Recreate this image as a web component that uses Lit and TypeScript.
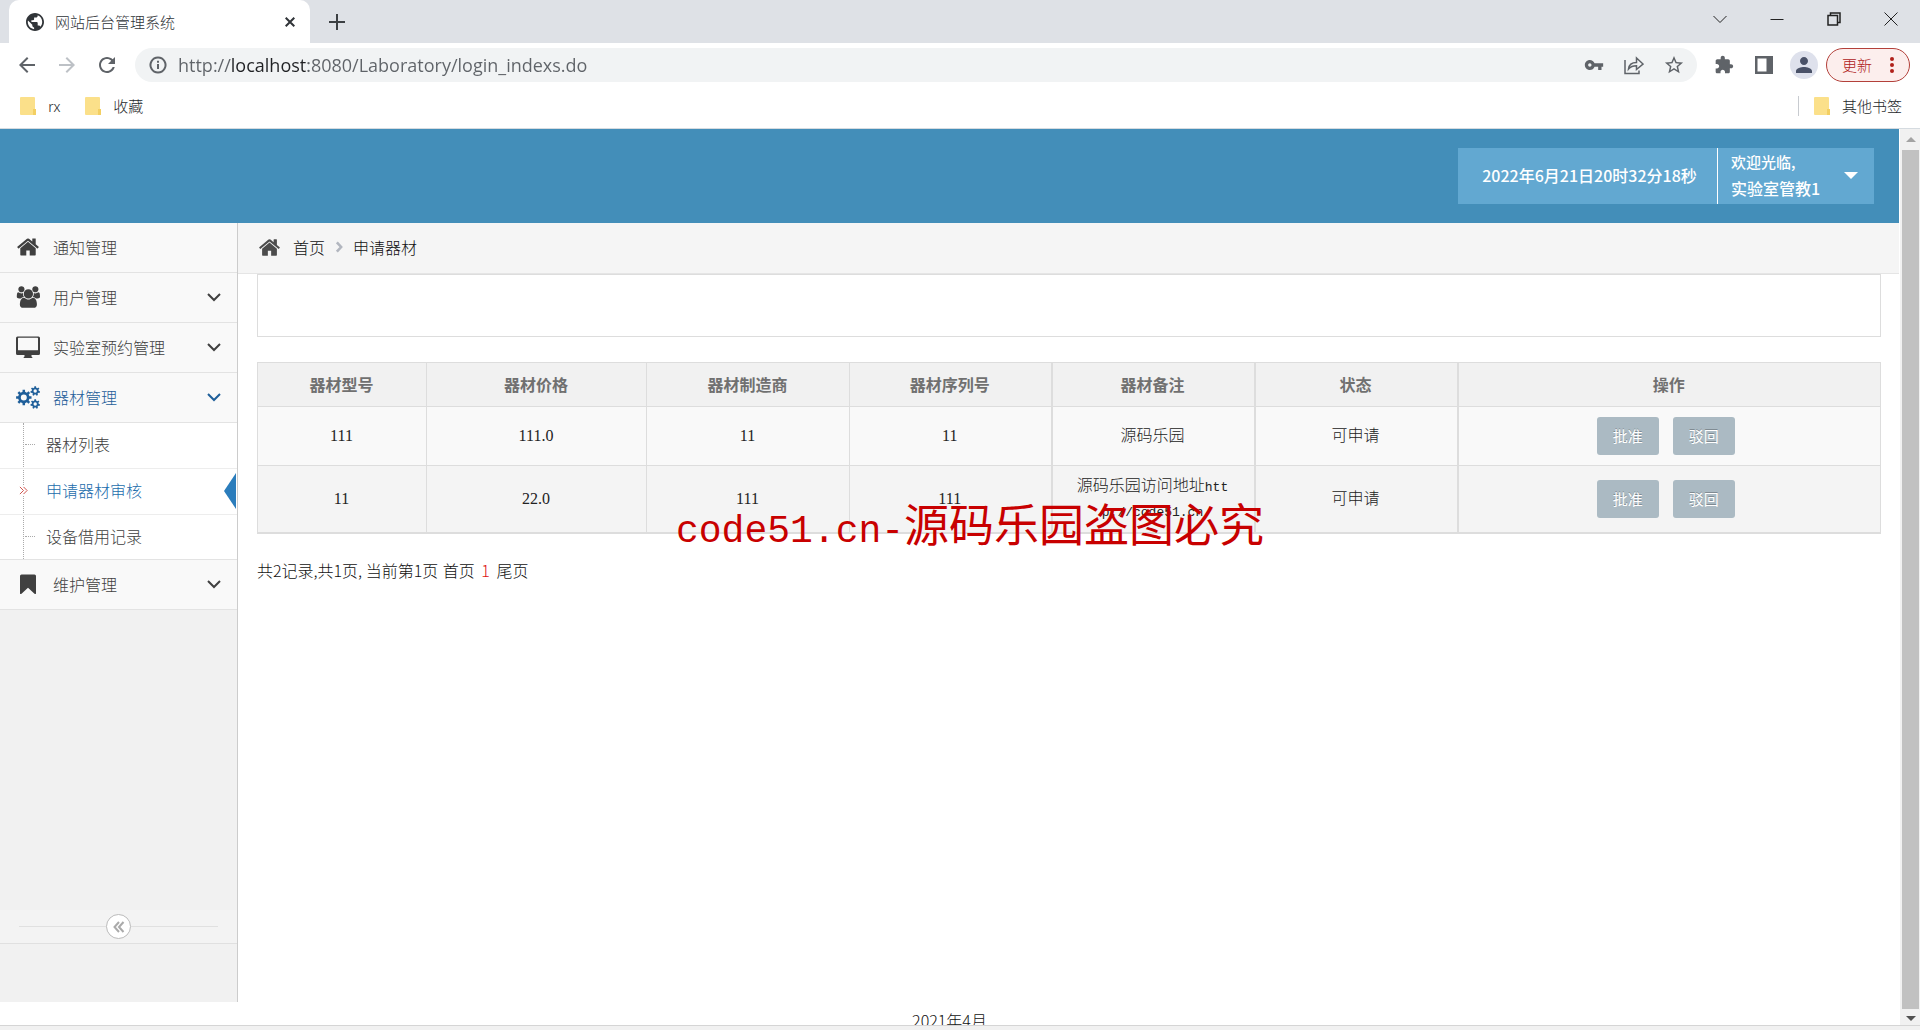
import { LitElement, html, css, svg, nothing } from "lit";
import { customElement, state } from "lit/decorators.js";
import { classMap } from "lit/directives/class-map.js";

/** Outline of a toothed wheel with a round hole, for use with the even-odd fill rule. */
function gear(cx: number, cy: number, r: number, hole: number, teeth: number): string {
  const inner = r * 0.74;
  const step = (Math.PI * 2) / teeth;
  const pt = (rad: number, a: number) =>
    `${(cx + rad * Math.cos(a)).toFixed(2)} ${(cy + rad * Math.sin(a)).toFixed(2)}`;
  const parts: string[] = [];
  for (let i = 0; i < teeth; i++) {
    const a = i * step - Math.PI / 2;
    parts.push(pt(inner, a - step * 0.28), pt(r, a - step * 0.2), pt(r, a + step * 0.2), pt(inner, a + step * 0.28));
  }
  return (
    `M${parts.join("L")}Z` +
    `M${cx - hole} ${cy}a${hole} ${hole} 0 1 0 ${hole * 2} 0a${hole} ${hole} 0 1 0 ${-hole * 2} 0Z`
  );
}

const fill = (box: string, d: string) =>
  svg`<svg viewBox=${box} fill="currentColor" aria-hidden="true"><path fill-rule="evenodd" d=${d} /></svg>`;
const line = (box: string, d: string, width: number) =>
  svg`<svg viewBox=${box} fill="none" stroke="currentColor" stroke-width=${width} aria-hidden="true"><path d=${d} /></svg>`;

const icons = {
  home: fill(
    "0 0 1792 1792",
    "M1472 992v480q0 26-19 45t-45 19h-384v-384h-256v384h-384q-26 0-45-19t-19-45v-480q0-1 .5-3t.5-3l575-474 575 474q1 2 1 6zm223-69l-62 74q-8 9-21 11h-3q-13 0-21-7l-692-577-692 577q-12 8-24 7-13-2-21-11l-62-74q-8-10-7-23.5t11-21.5l719-599q32-26 76-26t76 26l244 204v-195q0-14 9-23t23-9h192q14 0 23 9t9 23v408l219 182q10 8 11 21.5t-7 23.5z",
  ),
  users: fill(
    "0 0 1984 1792",
    "M657 896q-162 5-265 128h-134q-82 0-138-40.5t-56-118.5q0-353 124-353 6 0 43.5 21t97.5 42.5 119 21.5q67 0 133-23-5 37-5 66 0 139 81 256zm1071 637q0 120-73 189.5t-194 69.5h-874q-121 0-194-69.5t-73-189.5q0-53 3.5-103.5t14-109 26.5-108.5 43-97.5 62-81 85.5-53.5 111.5-20q10 0 43 21.5t73 48 107 48 135 21.5 135-21.5 107-48 73-48 43-21.5q61 0 111.5 20t85.5 53.5 62 81 43 97.5 26.5 108.5 14 109 3.5 103.5zm-1024-1277q0 106-75 181t-181 75-181-75-75-181 75-181 181-75 181 75 75 181zm704 384q0 159-112.5 271.5t-271.5 112.5-271.5-112.5-112.5-271.5 112.5-271.5 271.5-112.5 271.5 112.5 112.5 271.5zm576 225q0 78-56 118.5t-138 40.5h-134q-103-123-265-128 81-117 81-256 0-29-5-66 66 23 133 23 59 0 119-21.5t97.5-42.5 43.5-21q124 0 124 353zm-128-609q0 106-75 181t-181 75-181-75-75-181 75-181 181-75 181 75 75 181z",
  ),
  desktop: fill(
    "0 0 24 24",
    "M1.500 1.500H22.500Q24 1.500 24 3V18.500Q24 20 22.500 20H15.500V21.500Q16.500 22 16.500 23H7.500Q7.500 22 8.500 21.500V20H1.500Q0 20 0 18.500V3Q0 1.500 1.500 1.500ZM2 3.200V14.800Q2 15.300 2.500 15.300H21.500Q22 15.300 22 14.800V3.200Q22 2.800 21.500 2.800H2.500Q2 2.800 2 3.200Z",
  ),
  cogs: fill(
    "0 0 24 24",
    gear(7.8, 12.5, 7.8, 3, 8) + gear(19.2, 6, 4.8, 1.7, 7) + gear(19.2, 19, 4.8, 1.7, 7),
  ),
  bookmark: fill("0 0 24 24", "M5.500 2.500H18.500Q20 2.500 20 4V21.500Q19.500 22.500 18.500 21.700L12 15.800L5.500 21.700Q4.500 22.500 4 21.500V4Q4 2.500 5.500 2.500Z"),
  down: line("0 0 14 14", "M1 4l6 6 6-6", 2),
  right: line("0 0 14 14", "M4.500 1.500l5 5.500-5 5.500", 3),
  doubleRight: line("0 0 10 10", "M1 1l4 4-4 4M5 1l4 4-4 4", 1),
  doubleLeft: line("0 0 12 12", "M6 1L1.500 6 6 11M10.500 1L6 6l4.500 5", 2),
  globe: fill(
    "2 2 20 20",
    "M12 2C6.480 2 2 6.480 2 12s4.480 10 10 10 10-4.480 10-10S17.520 2 12 2zm-1 17.930c-3.950-.49-7-3.850-7-7.930 0-.62.08-1.210.21-1.790L9 15v1c0 1.100.9 2 2 2v1.930zm6.900-2.540c-.26-.81-1-1.390-1.900-1.390h-1v-3c0-.55-.45-1-1-1H8v-2h2c.55 0 1-.45 1-1V7h2c1.100 0 2-.9 2-2v-.41c2.930 1.190 5 4.060 5 7.410 0 2.080-.8 3.970-2.100 5.390z",
  ),
  close: line("0 0 10 10", "M.7 .7l8.600 8.600M9.300 .7l-8.600 8.600", 2),
  plus: line("0 0 16 16", "M8 0v16M0 8h16", 2),
  back: fill("0 0 24 24", "M20 11H7.830l5.590-5.590L12 4l-8 8 8 8 1.410-1.410L7.830 13H20v-2z"),
  forward: fill("0 0 24 24", "M12 4l-1.410 1.410L16.170 11H4v2h12.170l-5.580 5.590L12 20l8-8z"),
  reload: fill(
    "0 0 24 24",
    "M17.650 6.350C16.200 4.900 14.210 4 12 4c-4.420 0-7.990 3.580-7.990 8s3.570 8 7.990 8c3.730 0 6.840-2.550 7.730-6h-2.080c-.82 2.330-3.040 4-5.650 4-3.310 0-6-2.690-6-6s2.690-6 6-6c1.660 0 3.140.69 4.220 1.780L13 11h7V4l-2.350 2.350z",
  ),
  info: line("0 0 18 18", "M9 1.500a7.500 7.500 0 1 0 .01 0M9 8v5M9 4.800v2", 2),
  key: fill(
    "0 0 24 24",
    "M12.650 10C11.830 7.670 9.610 6 7 6c-3.310 0-6 2.690-6 6s2.690 6 6 6c2.610 0 4.830-1.670 5.650-4H17v4h4v-4h2v-4H12.650zM7 14c-1.100 0-2-.9-2-2s.9-2 2-2 2 .9 2 2-.9 2-2 2z",
  ),
  share: line("0 0 20 20", "M1 5v13.500h14v-3M4.500 14c.5-4.500 3.500-6.500 8-6.500v-4.500l6.500 6-6.500 5.500v-3.700c-3.500 0-6 .8-8 3.200z", 1.5),
  star: fill(
    "1 1 22 22",
    "M22 9.240l-7.190-.62L12 2 9.190 8.630 2 9.240l5.460 4.730L5.820 21 12 17.270 18.180 21l-1.630-7.030L22 9.240zM12 15.400l-3.760 2.270 1-4.280-3.320-2.880 4.380-.38L12 6.100l1.710 4.040 4.380.38-3.320 2.880 1 4.280L12 15.400z",
  ),
  puzzle: fill(
    "0 0 24 24",
    "M20.500 11H19V7c0-1.100-.9-2-2-2h-4V3.500C13 2.120 11.880 1 10.500 1S8 2.120 8 3.500V5H4c-1.100 0-1.990.9-1.990 2v3.800H3.500c1.490 0 2.700 1.210 2.700 2.700s-1.210 2.700-2.700 2.700H2V20c0 1.100.9 2 2 2h3.800v-1.500c0-1.490 1.210-2.700 2.700-2.700 1.490 0 2.700 1.210 2.700 2.700V22H17c1.100 0 2-.9 2-2v-4h1.500c1.380 0 2.500-1.120 2.500-2.500S21.880 11 20.500 11z",
  ),
  panel: fill("0 0 18 18", "M0 0H18V18H0ZM2.500 2.500V15.500H11.500V2.500Z"),
  person: fill(
    "2 2 20 20",
    "M12 12c2.210 0 4-1.790 4-4s-1.790-4-4-4-4 1.790-4 4 1.790 4 4 4zm0 2c-2.670 0-8 1.340-8 4v2h16v-2c0-2.660-5.330-4-8-4z",
  ),
  dots: svg`<svg viewBox="0 0 4 16" fill="currentColor" aria-hidden="true"><circle cx="2" cy="2" r="2"/><circle cx="2" cy="8" r="2"/><circle cx="2" cy="14" r="2"/></svg>`,
  winDown: line("0 0 14 14", "M.5 4l6.500 6.500L13.500 4", 1),
  winMin: line("0 0 14 14", "M.5 7.500h13", 1),
  winMax: line("0 0 14 14", "M1 3.500h9.500v9.500h-9.500zM3.500 3.500v-2.500h9.500v9.500h-2.500", 1.5),
  winClose: line("0 0 14 14", "M.5 .5l13 13M13.500 .5l-13 13", 1),
  folder: svg`<svg viewBox="0 0 16 18" aria-hidden="true"><rect width="15" height="18" rx="1" fill="#fbe08a"/><path d="M13 12h3v6h-3z" fill="#f3cf62"/></svg>`,
};

type IconName = keyof typeof icons;

interface MenuItem {
  label: string;
  icon: IconName;
  children?: string[];
  leaf?: boolean;
}

const MENU: MenuItem[] = [
  { label: "通知管理", icon: "home", leaf: true },
  { label: "用户管理", icon: "users" },
  { label: "实验室预约管理", icon: "desktop" },
  { label: "器材管理", icon: "cogs", children: ["器材列表", "申请器材审核", "设备借用记录"] },
  { label: "维护管理", icon: "bookmark" },
];

@customElement("browser-frame")
export class BrowserFrame extends LitElement {
  static styles = css`
    :host {
      display: block;
      color: #5f6368;
      font: 300 15px/20px "Noto Sans CJK SC", sans-serif;
    }
    svg { display: block; width: 100%; height: 100%; }
    button { border: 0; padding: 0; background: none; color: inherit; font: inherit; }
    .strip { display: flex; align-items: flex-end; height: 43px; background: #dee1e6; }
    .tab {
      display: flex;
      align-items: center;
      gap: 11px;
      box-sizing: border-box;
      width: 301px;
      height: 43px;
      margin-left: 9px;
      padding: 0 15px 0 17px;
      border-radius: 10px 10px 0 0;
      background: #fff;
      color: #303438;
    }
    .title { flex: 1; }
    .i10 { width: 10px; height: 10px; }
    .i14 { width: 14px; height: 14px; }
    .i16 { width: 16px; height: 16px; }
    .i18 { width: 18px; height: 18px; }
    .new { width: 54px; height: 43px; display: grid; place-items: center; color: #3c4043; }
    .window { display: flex; margin-left: auto; padding-right: 1px; align-self: flex-start; color: #222; }
    .window button { display: grid; place-items: center; width: 57px; height: 37px; }
    .bar { display: flex; align-items: center; height: 44px; padding: 0 10px 0 7px; }
    .slot { display: grid; place-items: center; width: 40px; height: 34px; }
    .i24 { width: 24px; height: 24px; }
    .i20 { width: 20px; height: 20px; }
    .dim { color: #bdc1c6; }
    .address {
      display: flex;
      align-items: center;
      flex: 1;
      height: 34px;
      margin: 0 7px 0 8px;
      padding: 0 3px 0 14px;
      border-radius: 17px;
      background: #f1f3f4;
    }
    .url {
      flex: 1;
      min-width: 0;
      height: 28px;
      margin-left: 11px;
      padding: 0;
      border: 0;
      outline: 0;
      font: 18px/28px "Open Sans", sans-serif;
      color: #5f6368;
      -webkit-text-fill-color: transparent;
      background: linear-gradient(to right, #5f6368 53px, #202124 53px 130px, #5f6368 130px);
      background-clip: text;
      -webkit-background-clip: text;
    }
    .avatar { display: grid; place-items: center; width: 28px; height: 28px; border-radius: 50%; background: #dee1ec; color: #4a5268; }
    .update {
      display: flex;
      align-items: center;
      justify-content: space-between;
      box-sizing: border-box;
      width: 84px;
      height: 34px;
      margin-left: 2px;
      padding: 0 15px;
      border: 1px solid #b3403a;
      border-radius: 17px;
      background: #fceeed;
      color: #b0211a;
    }
    .dots { width: 4px; height: 16px; }
    .marks { display: flex; align-items: center; height: 37px; padding: 0 18px 4px 20px; gap: 25px; color: #26292c; border-bottom: 1px solid #d5dbe0; }
    .mark { display: flex; align-items: center; gap: 12px; color: inherit; text-decoration: none; }
    .folder { width: 16px; height: 18px; }
    .other { margin-left: auto; padding-left: 15px; border-left: 1px solid #c8cbd0; }
  `;

  private slotButton(icon: IconName, label: string, size = "i20", extra = "") {
    return html`<button class="slot ${extra}" aria-label=${label}><span class=${size}>${icons[icon]}</span></button>`;
  }

  render() {
    return html`
      <div class="strip">
        <div class="tab">
          <span class="i18">${icons.globe}</span>
          <span class="title">网站后台管理系统</span>
          <button class="i10" aria-label="关闭标签页">${icons.close}</button>
        </div>
        <button class="new" aria-label="新标签页"><span class="i16">${icons.plus}</span></button>
        <div class="window">
          <button aria-label="搜索标签页"><span class="i14">${icons.winDown}</span></button>
          <button aria-label="最小化"><span class="i14">${icons.winMin}</span></button>
          <button aria-label="还原"><span class="i14">${icons.winMax}</span></button>
          <button aria-label="关闭"><span class="i14">${icons.winClose}</span></button>
        </div>
      </div>
      <div class="bar">
        ${this.slotButton("back", "后退", "i24")}
        ${this.slotButton("forward", "前进", "i24", "dim")}
        ${this.slotButton("reload", "重新加载", "i24")}
        <div class="address">
          <span class="i18">${icons.info}</span>
          <input class="url" aria-label="地址" value="http://localhost:8080/Laboratory/login_indexs.do" />
          ${this.slotButton("key", "密码")}
          ${this.slotButton("share", "分享")}
          ${this.slotButton("star", "收藏此页")}
        </div>
        ${this.slotButton("puzzle", "扩展程序")}
        ${this.slotButton("panel", "侧边栏", "i18")}
        <button class="slot" aria-label="用户"><span class="avatar"><span class="i20">${icons.person}</span></span></button>
        <button class="update">更新 <span class="dots">${icons.dots}</span></button>
      </div>
      <div class="marks">
        <a class="mark" href="#"><span class="folder">${icons.folder}</span>rx</a>
        <a class="mark" href="#"><span class="folder">${icons.folder}</span>收藏</a>
        <a class="mark other" href="#"><span class="folder">${icons.folder}</span>其他书签</a>
      </div>
    `;
  }
}

@customElement("side-menu")
export class SideMenu extends LitElement {
  static styles = css`
    :host {
      display: flex;
      flex-direction: column;
      box-sizing: border-box;
      width: 238px;
      border-right: 1px solid #ccc;
      background: #f1f1f1;
      font: 300 16px/24px "Noto Sans CJK SC", sans-serif;
    }
    svg { display: block; width: 100%; height: 100%; }
    ul { margin: 0; padding: 0; list-style: none; }
    .item {
      display: flex;
      align-items: center;
      height: 47px;
      padding: 0 16px 2px;
      border-bottom: 1px solid #e3e3e3;
      background: #f9f9f9;
      color: #404040;
      text-decoration: none;
    }
    .open { color: #1f5f9a; }
    .icon { width: 24px; height: 24px; margin-right: 13px; }
    .label { flex: 1; }
    .arrow { width: 14px; height: 14px; }
    .sub { position: relative; border-bottom: 1px solid #e3e3e3; background: #fff; }
    .sub::before { content: ""; position: absolute; top: 0; bottom: 0; left: 23px; border-left: 1px dotted #aaa; }
    .entry {
      display: flex;
      align-items: center;
      position: relative;
      height: 42px;
      padding: 0 0 3px 46px;
      border-bottom: 1px solid #ededed;
      color: #404040;
      text-decoration: none;
    }
    .sub li:last-child .entry { height: 41px; border-bottom: 0; }
    .entry::before { content: ""; position: absolute; left: 25px; top: 21px; width: 10px; border-top: 1px dotted #aaa; }
    .current { color: #1b6dac; }
    .current::before { display: none; }
    .current::after {
      content: "";
      position: absolute;
      right: 1px;
      top: 4px;
      border: 18px solid transparent;
      border-width: 18px 12px 18px 0;
      border-right-color: #2b7dbc;
    }
    .mark { position: absolute; left: 19px; top: 17px; width: 9px; height: 9px; background: #fff; color: #c8413a; }
    .toggle {
      display: flex;
      align-items: center;
      height: 33px;
      margin-top: auto;
      margin-bottom: 58px;
      padding: 0 19px;
      border-bottom: 1px solid #e0e0e0;
      background: #f3f3f3;
    }
    .rule { flex: 1; border-top: 1px solid #e0e0e0; }
    .collapse {
      display: grid;
      place-items: center;
      width: 25px;
      height: 25px;
      padding: 0;
      border: 1px solid #bbb;
      border-radius: 50%;
      background: #fff;
      color: #aaa;
    }
    .tiny { width: 12px; height: 12px; }
  `;

  @state() private current = "申请器材审核";

  render() {
    return html`
      <nav>
        <ul>
          ${MENU.map(
            (item) => html`<li>
              <a class=${classMap({ item: true, open: !!item.children })} href="#">
                <span class="icon">${icons[item.icon]}</span>
                <span class="label">${item.label}</span>
                ${item.leaf ? nothing : html`<span class="arrow">${icons.down}</span>`}
              </a>
              ${item.children
                ? html`<ul class="sub">
                    ${item.children.map(
                      (name) => html`<li>
                        <a
                          class=${classMap({ entry: true, current: name === this.current })}
                          href="#"
                          @click=${() => (this.current = name)}
                          >${name === this.current ? html`<span class="mark">${icons.doubleRight}</span>` : nothing}${name}</a
                        >
                      </li>`,
                    )}
                  </ul>`
                : nothing}
            </li>`,
          )}
        </ul>
      </nav>
      <div class="toggle">
        <span class="rule"></span>
        <button class="collapse" aria-label="收起菜单"><span class="tiny">${icons.doubleLeft}</span></button>
        <span class="rule"></span>
      </div>
    `;
  }
}

interface Row {
  model: string;
  price: string;
  maker: string;
  serial: string;
  note: string;
  link?: string;
  status: string;
}

const HEADS = ["器材型号", "器材价格", "器材制造商", "器材序列号", "器材备注", "状态", "操作"];

const ROWS: Row[] = [
  { model: "111", price: "111.0", maker: "11", serial: "11", note: "源码乐园", status: "可申请" },
  { model: "11", price: "22.0", maker: "111", serial: "111", note: "源码乐园访问地址", link: "http://code51.cn", status: "可申请" },
];

@customElement("equipment-table")
export class EquipmentTable extends LitElement {
  static styles = css`
    :host { display: block; }
    table { width: 100%; table-layout: fixed; border-collapse: collapse; border: 1px solid #ddd; border-bottom-width: 2px; }
    th, td { padding: 0 1px 1px 0; border: 1px solid #ddd; text-align: center; }
    th { height: 42px; background: #f1f1f1; color: #707070; font: bold 16px/24px "Noto Sans CJK SC", sans-serif; }
    td { height: 57px; background: #f9f9f9; color: #222; font: 300 16px/23px "Liberation Serif", "Noto Sans CJK SC", serif; }
    tr:nth-child(even) td { height: 65px; background: #f4f4f4; }
    .c1 { width: 169px; }
    .c2 { width: 220px; }
    .c3 { width: 203px; }
    .c4 { width: 202px; }
    .c5 { width: 203px; }
    .c6 { width: 203px; }
    .wide { border-left-width: 2px; }
    .note { max-width: 156px; margin: 0 auto; word-break: break-all; }
    .link { font-family: "Liberation Mono", monospace; font-size: 13px; }
    .actions { display: flex; justify-content: center; gap: 14px; padding-right: 6px; }
    .act {
      width: 62px;
      height: 38px;
      padding: 0;
      border: 0;
      border-radius: 3px;
      background: #abbac3;
      color: #fff;
      font: 15px/20px "Noto Sans CJK SC", sans-serif;
      text-shadow: 0 -1px 0 rgba(0, 0, 0, 0.25);
    }
  `;

  render() {
    return html`<table>
      <colgroup>
        ${HEADS.map((_, i) => html`<col class="c${i + 1}" />`)}
      </colgroup>
      <thead>
        <tr>${HEADS.map((h, i) => html`<th class=${classMap({ wide: i > 3 })} scope="col">${h}</th>`)}</tr>
      </thead>
      <tbody>
        ${ROWS.map(
          (r) => html`<tr>
            <td>${r.model}</td>
            <td>${r.price}</td>
            <td>${r.maker}</td>
            <td>${r.serial}</td>
            <td class="wide"><div class="note">${r.note}${r.link ? html`<span class="link">${r.link}</span>` : nothing}</div></td>
            <td class="wide">${r.status}</td>
            <td class="wide">
              <div class="actions"><button class="act">批准</button><button class="act">驳回</button></div>
            </td>
          </tr>`,
        )}
      </tbody>
    </table>`;
  }
}

@customElement("app-root")
export class AppRoot extends LitElement {
  static styles = css`
    :host {
      display: flex;
      flex-direction: column;
      position: relative;
      height: 100vh;
      overflow: hidden;
      background: #fff;
      color: #111;
      font: 300 16px/24px "Noto Sans CJK SC", sans-serif;
    }
    svg { display: block; width: 100%; height: 100%; }
    .view { display: flex; flex: 1; min-height: 0; }
    .page { display: flex; flex-direction: column; flex: 1; min-width: 0; }
    .banner { display: flex; justify-content: flex-end; align-items: flex-start; box-sizing: border-box; height: 94px; padding: 19px 25px; background: #438eb9; color: #fff; }
    .clock { display: grid; place-items: center; box-sizing: border-box; width: 260px; height: 56px; padding: 0 0 2px 4px; border-right: 1px solid #fff; background: #62a8d1; font-weight: 500; }
    .user {
      display: flex;
      align-items: center;
      justify-content: space-between;
      width: 156px;
      height: 56px;
      padding: 0 16px 2px 13px;
      box-sizing: border-box;
      border: 0;
      background: #62a8d1;
      color: #fff;
      font: 500 16px/27px "Noto Sans CJK SC", sans-serif;
      text-align: left;
    }
    .hello { display: block; font-size: 15px; }
    .caret { border: 7px solid transparent; border-top: 7px solid #fff; border-bottom: 0; }
    .middle { display: flex; flex: 1; min-height: 0; }
    .main { flex: 1; min-width: 0; }
    .crumbs { display: flex; align-items: center; height: 48px; padding: 0 20px 2px; border-bottom: 1px solid #e5e5e5; background: #f5f5f5; }
    .crumbs a { color: inherit; text-decoration: none; }
    .home { width: 23px; height: 23px; margin-right: 12px; color: #4c4c4c; }
    .sep { width: 12px; height: 12px; margin: 0 8px; color: #b2b6bf; }
    .body { padding: 0 18px 0 19px; }
    .filter { height: 61px; margin-bottom: 25px; border: 1px solid #ddd; }
    .pager { margin: 24px 0 0; word-break: keep-all; }
    .pager a { margin: 0 1px; color: inherit; text-decoration: none; }
    .pager .now { margin: 0 2px; color: #d11; }
    .footer { height: 23px; box-sizing: border-box; overflow: hidden; text-align: center; line-height: 36px; }
    .scroll { display: flex; flex-direction: column; align-items: center; width: 21px; padding: 0 1px 0 2px; box-sizing: border-box; background: #f1f1f1; border-left: 1px solid #fff; }
    .thumb { flex: 1; width: 17px; background: #c1c1c1; }
    .cap { display: grid; place-items: center; height: 21px; }
    .up { border: 5px solid transparent; border-bottom-color: #a3a3a3; border-top: 0; }
    .dn { border: 5px solid transparent; border-top-color: #505050; border-bottom: 0; }
    .low { height: 16px; padding-top: 2px; box-sizing: border-box; }
    .status { height: 4px; border-top: 1px solid #d5d5d5; background: #f1f1f1; }
    .watermark { position: absolute; left: 676px; top: 498px; margin: 0; color: #c80000; font: 45px/50px "Noto Sans CJK SC", sans-serif; white-space: nowrap; pointer-events: none; }
    .latin { font-family: "Liberation Mono", monospace; font-size: 38px; }
  `;

  render() {
    return html`
      <browser-frame></browser-frame>
      <div class="view">
        <div class="page">
          <header class="banner">
            <time class="clock">2022年6月21日20时32分18秒</time>
            <button class="user">
              <span><span class="hello">欢迎光临,</span>实验室管教1</span>
              <span class="caret"></span>
            </button>
          </header>
          <div class="middle">
            <side-menu></side-menu>
            <main class="main">
              <nav class="crumbs" aria-label="位置">
                <span class="home">${icons.home}</span>
                <a href="#">首页</a>
                <span class="sep">${icons.right}</span>
                <span>申请器材</span>
              </nav>
              <div class="body">
                <div class="filter"></div>
                <equipment-table></equipment-table>
                <p class="pager">共2记录,共1页, 当前第1页 <a href="#">首页</a> <a class="now" href="#">1</a> <a href="#">尾页</a></p>
              </div>
            </main>
          </div>
          <footer class="footer">2021年4月</footer>
        </div>
        <div class="scroll" aria-hidden="true">
          <span class="cap"><span class="up"></span></span>
          <span class="thumb"></span>
          <span class="cap low"><span class="dn"></span></span>
        </div>
      </div>
      <div class="status"></div>
      <p class="watermark"><span class="latin">code51.cn-</span>源码乐园盗图必究</p>
    `;
  }
}
